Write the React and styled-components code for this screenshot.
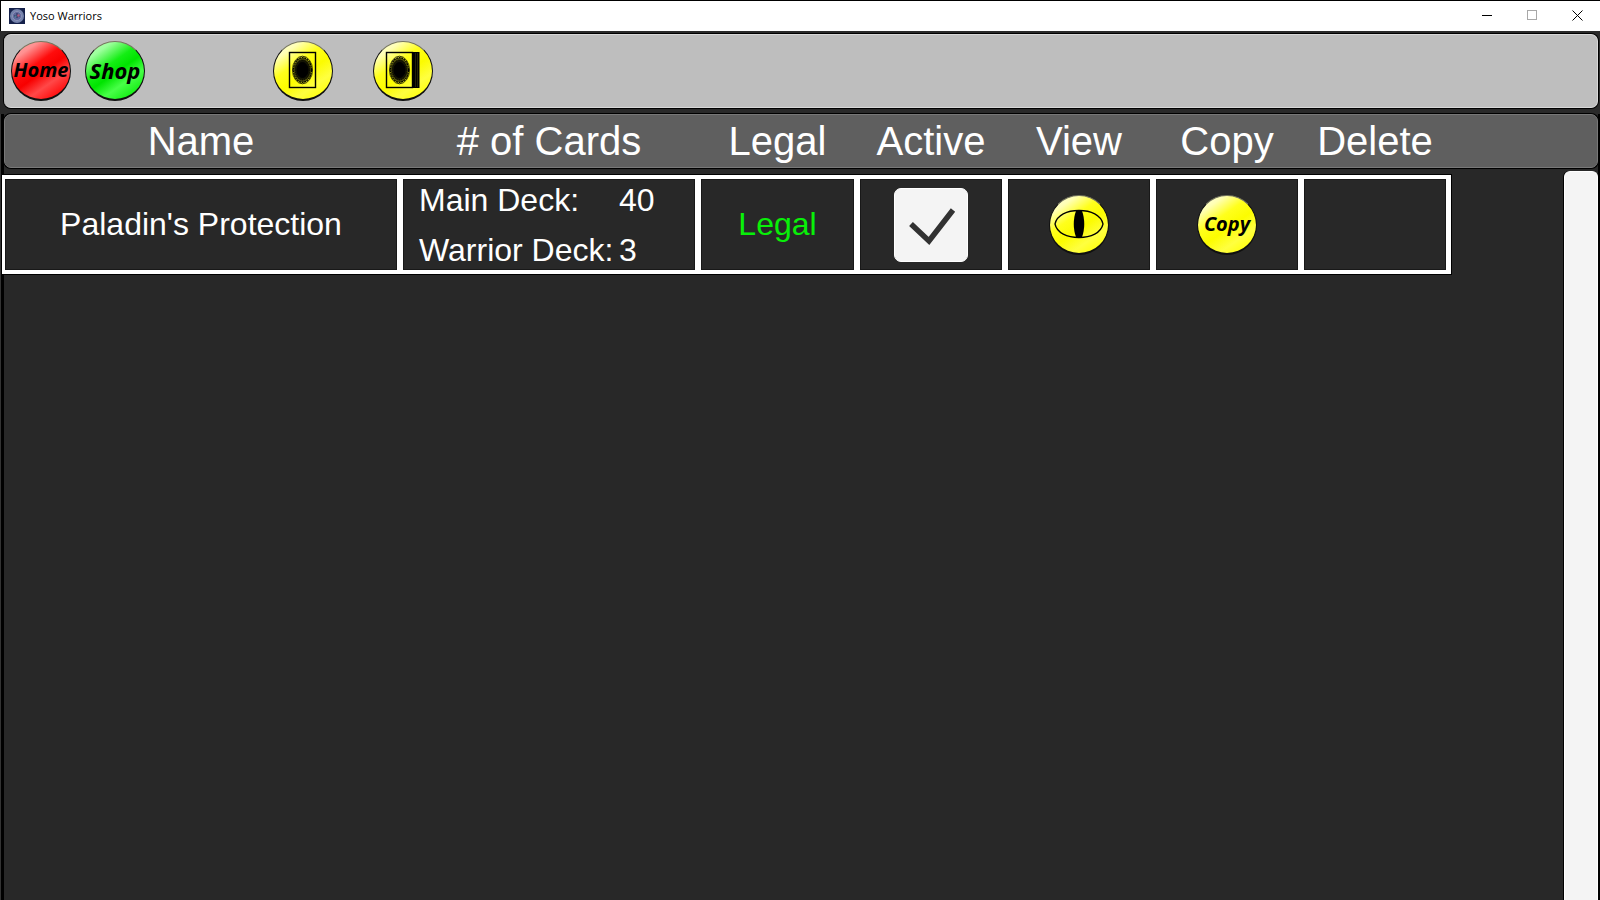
import {useState} from "react";
import styled, {createGlobalStyle} from "styled-components";

const GlobalStyle = createGlobalStyle`
    * {
        box-sizing: border-box;
    }
    body {
        margin: 0;
        background-color: #282828;
        font-family: "Liberation Sans", Arial, sans-serif;
    }
    button {
        padding: 0;
        border: none;
        background: none;
        color: inherit;
        cursor: pointer;
    }
`
const Window = styled.div`
    display: flex;
    flex-direction: column;
    min-height: 100vh;
    border-top: solid black 1px;
    background-color: #2a2a2a;
`
const TitleBar = styled.header`
    display: flex;
    align-items: center;
    height: 30px;
    padding: 0 0 1px 8px;
    border-left: solid black 1px;
    background-color: white;
`
const Title = styled.h1`
    flex: 1;
    margin: 0 0 0 5px;
    font: 400 11px "Open Sans", sans-serif;
    color: black;
`
const WindowButton = styled.button`
    display: grid;
    place-items: center;
    width: 45px;
    height: 29px;
    color: ${(props) => props.disabled ? "#a8a8a8" : "black"};
`
const Toolbar = styled.nav`
    display: flex;
    align-items: center;
    height: 74px;
    margin: 3px 2px 0 4px;
    padding: 0 0 1px 7px;
    border: solid #d8d8d8 1px;
    border-left-width: 0;
    border-radius: 7px;
    background-color: #bebebe;
    box-shadow: 0 0 0 1px black;
`
const ToolGroup = styled.div`
    display: flex;
    gap: ${(props) => props.$gap};
    margin-right: 128px;
`
const ballColors = {
    red: "#ffb4b4 0%, #ff9090 20%, #ff0c0c 40%, #f80000 52%, #ff4848 68%, #ff1010 84%, #e80000 100%",
    green: "#c8ffc8 0%, #9cff9c 20%, #14ee14 40%, #00e400 52%, #48ff48 68%, #18f018 84%, #00d800 100%",
    yellow: "#fffff0 0%, #ffffb4 20%, #ffff1c 38%, #fcfc00 54%, #ffff40 72%, #ffff10 86%, #f0f000 100%"
}
const Ball = styled.button`
    display: grid;
    place-items: center;
    width: 60px;
    height: 60px;
    border: solid #101010 1px;
    border-top-color: #77775f;
    border-bottom-width: 2px;
    border-radius: 50%;
    background: linear-gradient(145deg, ${(props) => ballColors[props.$color]}) border-box;
    font: italic 700 ${(props) => props.$size || "18px"}/24px "Open Sans", sans-serif;
    color: black;
    white-space: nowrap;
`
const Main = styled.main`
    flex: 1;
    display: grid;
    grid-template-columns: 1fr 34px;
    grid-template-rows: 57px 1fr;
    margin-top: 6px;
    padding-right: 2px;
    background: linear-gradient(90deg, #333333 1px, black 1px, black 4px, #282828 4px, #282828 calc(100% - 2px), black calc(100% - 2px));
`
const DeckTable = styled.table`
    display: block;
    grid-area: 1 / 1 / 3 / 3;
`
const TableHead = styled.thead`
    display: block;
    margin-left: 4px;
    border: solid #787878 1px;
    border-radius: 7px;
    background-color: #5f5f5f;
    box-shadow: 0 0 0 1px black;
`
const TableBody = styled.tbody`
    display: block;
    padding: 7px 147px 0 2px;
`
const columns = `
    display: grid;
    grid-template-columns: 392fr 292fr 153fr 142fr 142fr 142fr 142fr;
    gap: 6px;
`
const HeadRow = styled.tr`
    ${columns}
    margin-right: 151px;
`
const HeadCell = styled.th`
    padding: 0;
    font-size: 40px;
    font-weight: 400;
    line-height: 52px;
    color: white;
    text-align: center;
    white-space: nowrap;
`
const DeckRow = styled.tr`
    ${columns}
    padding: 4px 5px 4px 3px;
    background-color: white;
    box-shadow: 0 0 0 1px black;
`
const DeckCell = styled.td`
    display: grid;
    place-items: center;
    height: 91px;
    padding: 0;
    background-color: #282828;
    box-shadow: inset 0 0 0 1px #181818;
    font-size: 32px;
    color: ${(props) => props.$legal ? "#08f008" : "white"};
    white-space: nowrap;
`
const Counts = styled.dl`
    display: grid;
    grid-template-columns: 200px auto;
    row-gap: 10px;
    justify-self: start;
    margin: 0 0 0 16px;
    line-height: 40px;
`
const Count = styled.dd`
    margin: 0;
`
const ActiveBox = styled.label`
    display: grid;
    width: 74px;
    height: 74px;
`
const Checkbox = styled.input`
    grid-area: 1 / 1;
    appearance: none;
    width: 74px;
    height: 74px;
    margin: 0;
    border: solid white 1px;
    border-radius: 7px;
    background-color: #f4f4f4;
`
const CheckMark = styled.svg`
    grid-area: 1 / 1;
    z-index: 1;
    pointer-events: none;
`
const ScrollBar = styled.div`
    grid-area: 2 / 2;
    border: solid white 1px;
    border-bottom: none;
    border-radius: 6px 6px 0 0;
    background-color: #f4f4f4;
    box-shadow: -1px 0 0 black;
`

const AppIcon = () => (
    <svg width="16" height="16" viewBox="0 0 16 16">
        <rect width="16" height="16" fill="#14204a"/>
        <circle cx="8" cy="8" r="7" fill="#7482ab"/>
        <circle cx="8" cy="8" r="4.5" fill="#5f689c" stroke="#8c94b8"/>
        <path d="M5 8h6M8 5v5" stroke="#454876" strokeWidth="2"/>
        <circle cx="9.5" cy="7.5" r="1.2" fill="#b05a7c"/>
        <circle cx="6.5" cy="8.5" r="1" fill="#4c8298"/>
    </svg>
)
const CardIcon = ({deck}) => (
    <svg width="36" height="38" viewBox="0 0 36 38" fill="none" stroke="black">
        <rect x={deck ? 1.5 : 4.5} y="1.5" width="26" height="35" strokeWidth="1.4"/>
        {deck && <rect x="27" y="1" width="7.5" height="36" fill="black" stroke="none"/>}
        {deck && <path d="M30.5 2v34M32.5 2v34" stroke="#44440c" strokeWidth="0.5"/>}
        <ellipse cx={deck ? 14.5 : 17.5} cy="19" rx="10" ry="13.8" strokeWidth="0.8"/>
        <ellipse cx={deck ? 14.5 : 17.5} cy="19" rx="9" ry="12.3" fill="#55550c" strokeWidth="1.2" strokeDasharray="2 0.6"/>
        <ellipse cx={deck ? 14.5 : 17.5} cy="19" rx="7.4" ry="10" fill="#141404" strokeDasharray="1.4 0.8"/>
        <ellipse cx={deck ? 14.5 : 17.5} cy="19" rx="5.5" ry="7.5" fill="black"/>
    </svg>
)
const EyeIcon = () => (
    <svg width="50" height="30" viewBox="0 0 50 30">
        <path d="M1 15C3 6 13 1.5 25 1.5S47 6 49 15C47 24 37 28.5 25 28.5S3 24 1 15Z" fill="none" stroke="black" strokeWidth="1.3"/>
        <path d="M22 2h6c3 8 3 18 0 26h-6c-3-8-3-18 0-26Z" fill="black"/>
    </svg>
)

const headings = ["Name", "# of Cards", "Legal", "Active", "View", "Copy", "Delete"];
const decks = [
    {name: "Paladin's Protection", main: 40, warrior: 3, legal: true}
]

export default function App() {
    const [activeDeck, setActiveDeck] = useState("Paladin's Protection");
    return(
        <>
            <GlobalStyle/>
            <Window>
                <TitleBar>
                    <AppIcon/>
                    <Title>Yoso Warriors</Title>
                    <WindowButton aria-label="Minimize">
                        <svg width="11" height="11" stroke="currentColor"><path d="M0 5.5h10"/></svg>
                    </WindowButton>
                    <WindowButton aria-label="Maximize" disabled>
                        <svg width="11" height="11" stroke="currentColor" fill="none"><rect x="0.5" y="0.5" width="9" height="9"/></svg>
                    </WindowButton>
                    <WindowButton aria-label="Close">
                        <svg width="11" height="11" stroke="currentColor"><path d="M0.5 0.5l10 10M10.5 0.5l-10 10"/></svg>
                    </WindowButton>
                </TitleBar>
                <Toolbar>
                    <ToolGroup $gap="14px">
                        <Ball $color="red" $size="20px">Home</Ball>
                        <Ball $color="green" $size="22px">Shop</Ball>
                    </ToolGroup>
                    <ToolGroup $gap="40px">
                        <Ball $color="yellow" aria-label="Cards"><CardIcon/></Ball>
                        <Ball $color="yellow" aria-label="Decks"><CardIcon deck/></Ball>
                    </ToolGroup>
                </Toolbar>
                <Main>
                    <DeckTable>
                        <TableHead>
                            <HeadRow>
                                {headings.map((item) => {
                                    return <HeadCell key={item}>{item}</HeadCell>
                                })}
                            </HeadRow>
                        </TableHead>
                        <TableBody>
                            {decks.map((deck) => {
                                return <DeckRow key={deck.name}>
                                    <DeckCell>{deck.name}</DeckCell>
                                    <DeckCell>
                                        <Counts>
                                            <dt>Main Deck:</dt><Count>{deck.main}</Count>
                                            <dt>Warrior Deck:</dt><Count>{deck.warrior}</Count>
                                        </Counts>
                                    </DeckCell>
                                    <DeckCell $legal={deck.legal}>{deck.legal ? "Legal" : "Illegal"}</DeckCell>
                                    <DeckCell>
                                        <ActiveBox>
                                            <Checkbox type="checkbox" aria-label="Active" checked={activeDeck === deck.name} onChange={(e) => setActiveDeck(e.target.checked ? deck.name : "")}/>
                                            {activeDeck === deck.name && <CheckMark width="74" height="74" viewBox="0 0 74 74">
                                                <path d="M17 36L35 53L59 22" fill="none" stroke="#323232" strokeWidth="5.5"/>
                                            </CheckMark>}
                                        </ActiveBox>
                                    </DeckCell>
                                    <DeckCell><Ball $color="yellow" aria-label="View"><EyeIcon/></Ball></DeckCell>
                                    <DeckCell><Ball $color="yellow" $size="20px">Copy</Ball></DeckCell>
                                    <DeckCell/>
                                </DeckRow>
                            })}
                        </TableBody>
                    </DeckTable>
                    <ScrollBar/>
                </Main>
            </Window>
        </>
    )
}
